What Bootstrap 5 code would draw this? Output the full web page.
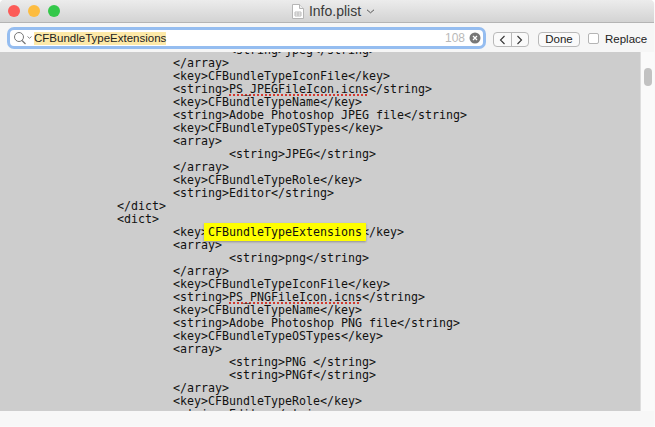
<!doctype html>
<html lang="en"><head><meta charset="utf-8">
<link href="https://cdn.jsdelivr.net/npm/bootstrap@5.3.0/dist/css/bootstrap.min.css" rel="stylesheet">
<style>
html,body{margin:0;height:100%;overflow:hidden;background:#fff}
body{font-family:"Liberation Sans",Arial,sans-serif;color:#222}
.win{width:654px;height:426px;background:#f6f6f6;border-radius:5px 5px 0 0;overflow:hidden;box-shadow:0 0 1px rgba(0,0,0,.25)}
.ttl{height:23px;flex:none;background:linear-gradient(#ececec,#d3d3d3);border-bottom:1px solid #b4b4b4;position:relative;font-size:14px;color:#3a3a3a;padding-left:13px;gap:5px}
.dots{position:absolute;left:8px;top:5px;gap:8px}
.dots i{width:12px;height:12px;border-radius:50%;display:block}
.findb{height:29px;flex:none;background:#f6f6f6;padding:7px 0 0 10px;font-size:11.5px}
.sf{width:473px;height:16px;background:#fff;border-radius:4px;box-shadow:0 0 0 3px #95bdf0;padding:0 2px 0 0}
.sel{background:#fde9a8;color:#222;font-size:11.5px;line-height:13px;width:132px;text-align:center;white-space:nowrap}
.cnt{color:#b9b9b9;margin-left:auto;font-size:12px}
.bt{border:1px solid #b9b9b9;background:#fafafa;border-radius:4px;height:15px;color:#222;line-height:13px;margin-top:2px}
.pair{width:36px;margin-left:10px}
.pair span{flex:1;display:flex;align-items:center;justify-content:center}
.pair span+span{border-left:1px solid #b9b9b9}
.donebt{width:42px;text-align:center;margin-left:9px}
.ck{width:11px;height:11px;border:1px solid #b5b5b5;background:#fff;border-radius:2px;margin-left:8px;margin-right:6px;margin-top:3px}
.replbl{margin-top:1px}
.bodyrow{height:359px;flex:none}
.code{width:641px;background:#cdcdcd;overflow:hidden;position:relative;height:359px;border-right:1px solid #dedede}
.codetxt{margin:-8px 0 0 0;font-family:"DejaVu Sans Mono",monospace;font-size:11.63px;line-height:13px;color:#111}
.ln{display:block;height:13px;white-space:pre;padding-left:117px}
.t1{padding-left:173px}.t2{padding-left:229px}
.sq{text-decoration:underline dotted #d23a30 1.5px;text-underline-offset:1px;text-decoration-skip-ink:none}
.hit{position:absolute;left:204px;top:171px;width:162px;height:18px;background:#ffff00;color:#111;font-family:"DejaVu Sans Mono",monospace;font-size:11.63px;line-height:18px;padding-left:4px;box-shadow:0 1px 2px rgba(0,0,0,.3);white-space:pre}
.sb{width:13px;background:#fafafa;position:relative}
.thumb{position:absolute;left:3px;top:16px;width:8px;height:18px;border-radius:4px;background:#c2c2c2}
.foot{flex:1;background:#f7f7f7}
</style></head><body>
<div class="win d-flex flex-column">
<div class="ttl d-flex align-items-center justify-content-center">
<div class="dots d-flex"><i style="background:#fc5b57"></i><i style="background:#fdbc40"></i><i style="background:#34c84a"></i></div>
<svg width="12" height="15" viewBox="0 0 12 15"><path d="M.5.5h7l4 4v10H.5z" fill="#fff" stroke="#b5b5b5"/><path d="M7.5.5v4h4" fill="#eee" stroke="#b5b5b5"/><path d="M3 8h6v4H3zM3 10h6M6 8v4" fill="none" stroke="#bbb"/></svg>
<span>Info.plist</span>
<svg width="9" height="5" viewBox="0 0 9 5"><path d="M1 .8l3.5 3 3.5-3" fill="none" stroke="#555"/></svg>
</div>
<div class="findb d-flex align-items-start">
<div class="sf d-flex align-items-center">
<svg width="24" height="14" viewBox="0 0 24 14"><circle cx="9" cy="6" r="4.5" fill="none" stroke="#777"/><path d="M12 9.5l3.500 3.500" stroke="#777" stroke-width="1.200"/><path d="M17.500 5.500l2 1.800 2-1.800" fill="none" stroke="#888"/></svg>
<span class="sel">CFBundleTypeExtensions</span>
<span class="cnt">108</span>
<svg width="12" height="12" viewBox="0 0 12 12" class="ms-1"><circle cx="6" cy="6" r="5.500" fill="#777"/><path d="M4 4l4 4M8 4l-4 4" stroke="#fff" stroke-width="1.300"/></svg>
</div>
<div class="bt pair d-flex"><span><svg width="7" height="10" viewBox="0 0 7 10"><path d="M5.500 1l-4 4 4 4" fill="none" stroke="#333" stroke-width="1.100"/></svg></span><span><svg width="7" height="10" viewBox="0 0 7 10"><path d="M1.500 1l4 4-4 4" fill="none" stroke="#333" stroke-width="1.100"/></svg></span></div>
<div class="bt donebt">Done</div>
<div class="ck"></div><span class="replbl">Replace</span>
</div>
<div class="bodyrow d-flex">
<div class="code"><div class="codetxt">
<span class="ln t2">&lt;string&gt;jpeg&lt;/string&gt;</span>
<span class="ln t1">&lt;/array&gt;</span>
<span class="ln t1">&lt;key&gt;CFBundleTypeIconFile&lt;/key&gt;</span>
<span class="ln t1">&lt;string&gt;<span class="sq">PS_JPEGFileIcon.icns</span>&lt;/string&gt;</span>
<span class="ln t1">&lt;key&gt;CFBundleTypeName&lt;/key&gt;</span>
<span class="ln t1">&lt;string&gt;Adobe Photoshop JPEG file&lt;/string&gt;</span>
<span class="ln t1">&lt;key&gt;CFBundleTypeOSTypes&lt;/key&gt;</span>
<span class="ln t1">&lt;array&gt;</span>
<span class="ln t2">&lt;string&gt;JPEG&lt;/string&gt;</span>
<span class="ln t1">&lt;/array&gt;</span>
<span class="ln t1">&lt;key&gt;CFBundleTypeRole&lt;/key&gt;</span>
<span class="ln t1">&lt;string&gt;Editor&lt;/string&gt;</span>
<span class="ln">&lt;/dict&gt;</span>
<span class="ln">&lt;dict&gt;</span>
<span class="ln t1">&lt;key&gt;CFBundleTypeExtensions&lt;/key&gt;</span>
<span class="ln t1">&lt;array&gt;</span>
<span class="ln t2">&lt;string&gt;png&lt;/string&gt;</span>
<span class="ln t1">&lt;/array&gt;</span>
<span class="ln t1">&lt;key&gt;CFBundleTypeIconFile&lt;/key&gt;</span>
<span class="ln t1">&lt;string&gt;<span class="sq">PS_PNGFileIcon.icns</span>&lt;/string&gt;</span>
<span class="ln t1">&lt;key&gt;CFBundleTypeName&lt;/key&gt;</span>
<span class="ln t1">&lt;string&gt;Adobe Photoshop PNG file&lt;/string&gt;</span>
<span class="ln t1">&lt;key&gt;CFBundleTypeOSTypes&lt;/key&gt;</span>
<span class="ln t1">&lt;array&gt;</span>
<span class="ln t2">&lt;string&gt;PNG &lt;/string&gt;</span>
<span class="ln t2">&lt;string&gt;PNGf&lt;/string&gt;</span>
<span class="ln t1">&lt;/array&gt;</span>
<span class="ln t1">&lt;key&gt;CFBundleTypeRole&lt;/key&gt;</span>
<span class="ln t1">&lt;string&gt;Editor&lt;/string&gt;</span>
</div><div class="hit">CFBundleTypeExtensions</div></div>
<div class="sb"><div class="thumb"></div></div>
</div>
<div class="foot"></div>
</div>
</body></html>
